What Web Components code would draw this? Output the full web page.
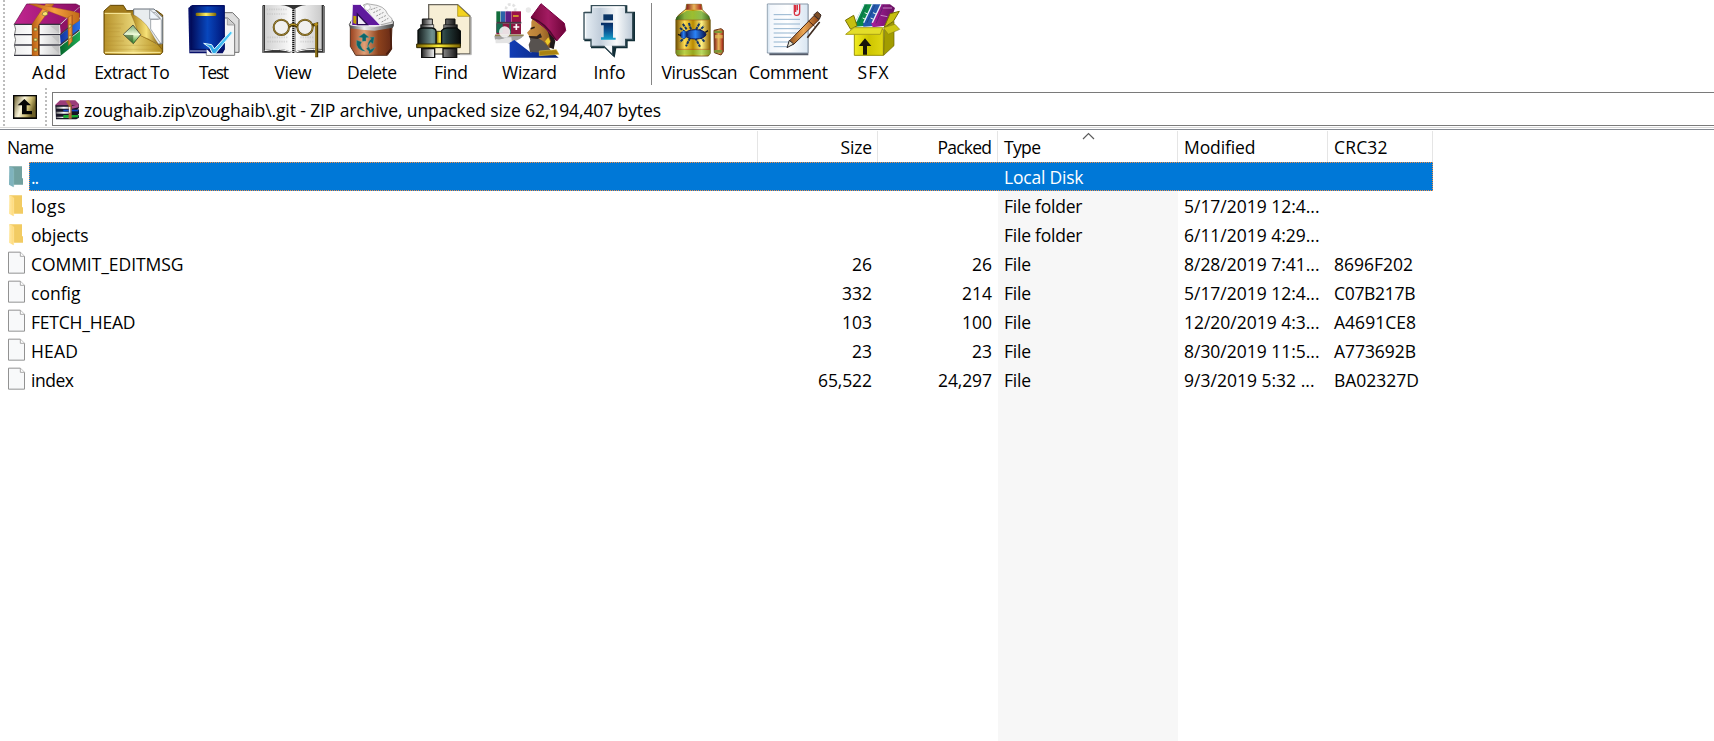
<!DOCTYPE html>
<html lang="en">
<head>
<meta charset="utf-8">
<title>zoughaib.zip</title>
<style>
html,body{margin:0;height:100%;overflow:hidden;background:#fff}
body{font:17.5px/29px "Open Sans","Noto Sans",sans-serif;color:#000}
</style>
</head>
<body>
<archive-window></archive-window>
<script>
const lin=(id,stops,v)=>`<linearGradient id="${id}" x1="0" y1="0" x2="${v?0:1}" y2="${v?1:0}">${stops.map((c,i)=>`<stop offset="${i/(stops.length-1)}" stop-color="${c}"/>`).join('')}</linearGradient>`;

/* Each entry: viewBox and artwork, drawn on a grid of three units per pixel. */
const ICONS={
add:['24 0 246 174',`<defs>${lin('p',['#efefef','#fff','#c8c8c8'])}${lin('m',['#c12690','#8a0e64'])}${lin('o',['#b65c12','#f6a040','#c06a18'])}${lin('b',['#1234a0','#2b72ea'])}${lin('g',['#05652c','#20ad54'])}</defs>
<path d="M180 140L240 93V121L182 167z" fill="url(#g)"/><path d="M180 106L240 57V88L182 134z" fill="url(#b)"/><path d="M180 75L240 20V52L182 103z" fill="#8e1265"/>
<path d="M42 74L80 12H228L240 18L178 73z" fill="url(#m)" stroke="#650746" stroke-width="2"/>
<path d="M46 74H178V101H46zM46 107H178V132H46zM46 138H178V164H46z" fill="url(#p)"/>
<path d="M42 73H182M42 104H180L238 56M42 135H180L238 90M42 166H182" stroke="#34343f" stroke-width="4" fill="none"/>
<path d="M43 73Q50 88 44 102M43 105Q50 119 44 133M43 136Q50 150 44 165" stroke="#777" stroke-width="3" fill="none"/>
<path d="M150 77l28-2v25l-8-7zM155 108l24-2v25zM155 139l24-2v26z" fill="#bbb" opacity=".7"/>
<path d="M203 52L217 41V124L205 138z" fill="url(#o)" stroke="#955013"/><path d="M96 72L137 12H162L116 74V167H96z" fill="url(#o)" stroke="#8b4a10"/><path d="M88 12H109L219 34L238 40L238 62L217 76V45L200 54z" fill="url(#o)" stroke="#955013"/>
<path d="M114 76h5v89h-5z" fill="#74390c"/><path d="M129 37l10-3 5 9-9 5-9-4zM102 84h9v8h-9zM102 115h9v8h-9zM102 145h9v8h-9zM206 76l7-4v9l-7 4zM206 109l7-4v9l-7 4z" fill="#ffe36b" stroke="#69713b" stroke-width="2"/>`],
extract:['270 0 252 174',`<defs>${lin('f',['#b8932c','#e8d476','#b58e1c'])}${lin('c',['#a67c14','#f7e278','#6c4700'])}${lin('d',['#70a06a','#effbd7','#2f981e'],1)}</defs>
<path d="M312 158V33L331 16H370L380 32H470L488 45V156L482 163H316z" fill="#a27b1b" stroke="#624500" stroke-width="3"/>
<path d="M401 27H462L488 52V130L470 134L401 60z" fill="#e9edef" stroke="#69717b" stroke-width="3"/><path d="M455 38H467L484 60V133L452 87V58H476" fill="#fff" stroke="#7b838b" stroke-width="2"/><path d="M449 28V57H480z" fill="#eef5fb" stroke="#7b838b" stroke-width="2"/>
<path d="M315 40H393L417 61L416 105L480 137L486 158L480 162H314z" fill="url(#f)"/><path d="M392 40Q405 68 417 105Q446 115 472 133L486 148Q462 115 450 91Q430 57 392 40z" fill="url(#c)" stroke="#7b5710"/>
<path d="M315 72h56M315 84h48M315 95h44M315 110h47M315 123h57M315 136h156M315 148h164" stroke="#b49034" stroke-width="2" opacity=".45"/><path d="M314 40H392M315 157H482" stroke="#fff1a4" stroke-width="3"/>
<path d="M399 75L422 104L400 131L370 103z" fill="url(#d)" stroke="#222" stroke-width="2"/><path d="M399 77V129M372 103H420" stroke="#fff" opacity=".5"/><path d="M371 104L400 130L400 105z" fill="#2b5320" opacity=".6"/>`],
test:['12 0 240 174',`<defs>${lin('b',['#020b58','#0847bd','#001679'])}${lin('c',['#2699dc','#4ccdfc'])}${lin('o',['#7d6500','#fff066','#7d6500'])}</defs>
<path d="M148 38H188L207 58V157H140z" fill="#dedede" stroke="#6e6e6e" stroke-width="3"/><path d="M109 54H173L194 73V166H109z" fill="#f4f4f4" stroke="#777" stroke-width="3"/><path d="M172 55V75H193" fill="#ccc" stroke="#888" stroke-width="2"/>
<path d="M55 24L67 15H164V149L158 160H58z" fill="#07106a"/><path d="M62 18H163V148H62z" fill="url(#b)" stroke="#00105c" stroke-width="2"/><path d="M60 153H115" stroke="#bbc0de" stroke-width="3"/><path d="M112 166V136L140 163L160 130V75L172 75H193V166z" fill="#f2f2f2" opacity="0"/><path d="M110 148L128 164H110z" fill="#fff"/>
<rect x="77" y="38" width="62" height="10" rx="4" fill="url(#o)"/><path d="M101 130L125 134L133 147L181 94L188 98L136 161H128L119 143z" fill="url(#c)" stroke="#e5faff" stroke-width="3"/>`],
view:['252 0 234 174',`<defs>${lin('p',['#d1d1d1','#fff','#cacaca'])}</defs>
<path d="M278 15H462V158H278z" fill="#333"/><path d="M276 18H282V158H276zM459 18H465V158H459z" fill="#777"/>
<path d="M285 15H330Q360 17 371 31Q382 17 410 15H455V147Q402 141 371 157Q330 141 285 150z" fill="url(#p)"/><path d="M284 152Q330 142 371 159Q402 143 456 151" stroke="#fff" stroke-width="3" fill="none"/>
<path d="M372 28V157" stroke="#929292" stroke-width="12" opacity=".7"/><path d="M370 30V159" stroke="#111" stroke-width="6" stroke-dasharray="3 3"/>
<path d="M290 28h61M291 42h58M292 112h61M292 125h61M391 112h42M391 125h42" stroke="#aaa" stroke-width="5" stroke-dasharray="4 3" opacity=".35"/>
<circle cx="334" cy="82" r="23" fill="#f0f0ef" stroke="#59460a" stroke-width="6"/><circle cx="405" cy="82" r="23" fill="#f0f0ef" stroke="#59460a" stroke-width="6"/><circle cx="334" cy="82" r="23" fill="none" stroke="#c4a550" stroke-width="2"/><circle cx="405" cy="82" r="23" fill="none" stroke="#c4a550" stroke-width="2"/>
<path d="M357 80Q369 68 382 80M427 76L440 72V172" fill="none" stroke="#4c3a04" stroke-width="9"/><path d="M357 78Q369 68 382 78M438 76V170" fill="none" stroke="#c9a52e" stroke-width="3"/><circle cx="438" cy="73" r="5" fill="#b78f1a"/>`],
delete:['-24 0 240 174',`<defs>${lin('r',['#9b421f','#e1a077','#8e431d','#672a16'])}${lin('s',['#444','#eee','#999','#444'])}</defs>
<path d="M31 139V77L156 76L153 150L142 166H47z" fill="url(#r)" stroke="#57301e" stroke-width="3"/><path d="M151 78L154 146L139 163" fill="none" stroke="#4a1d0e" stroke-width="5"/>
<path d="M28 74Q33 58 46 53H148L160 65V79Q95 92 31 80z" fill="#ddd" stroke="#444" stroke-width="3"/>
<path d="M70 15Q80 8 92 13Q135 16 143 43L156 56V66L116 76z" fill="#f3f3f3" stroke="#888" stroke-width="2"/><path d="M92 29L112 22M100 38L122 28M109 48L133 36M116 57L139 46M125 66L145 55" stroke="#999" stroke-width="3" stroke-dasharray="6 3"/>
<path d="M37 13H61L123 77H35z" fill="#5f1a9d" stroke="#fff" stroke-width="3"/><path d="M52 42V74H82z" fill="#efeaf4" stroke="#2a0c50" stroke-width="4"/><circle cx="82" cy="22" r="9" fill="#fff" stroke="#aaa" stroke-width="2"/>
<path d="M29 76Q50 81 103 82L159 71V83L104 92Q65 91 30 85z" fill="url(#s)"/><path d="M40 47l9 2v24l-9-4z" fill="#bda100"/>
<path d="M56 111L72 100L87 112L78 113V123L67 124V113zM103 111L99 132L92 126Q83 137 83 144Q82 124 94 117L90 112zM50 121L65 126L61 135Q65 148 76 154Q57 153 50 135zM79 146L86 139L91 149L106 142L97 155L87 161V154z" fill="#0d666b" stroke="#4fa8a4"/>`],
find:['216 0 234 174',`<defs>${lin('a',['#121919','#71918f','#263d3d','#090b0b'])}${lin('s',['#222','#e6e6e6','#777','#181818'])}${lin('y',['#745d00','#fff138','#776000'])}</defs>
<path d="M266 14H353L390 48V162H266z" fill="#f7eed5" stroke="#6b675e" stroke-width="4"/><path d="M394 51V164H360" stroke="#bbb" stroke-width="3" fill="none"/><path d="M353 15L389 49H353z" fill="#f3d21e" stroke="#9b8510" stroke-width="2"/>
<path d="M289 94H310V130H289z" fill="url(#y)" stroke="#453b09" stroke-width="3"/>
<path d="M247 57H277V86H247zM317 57H345V86H317z" fill="url(#s)" stroke="#111" stroke-width="3"/><path d="M242 74H281V88H242zM311 74H352V88H311z" fill="url(#s)" stroke="#111" stroke-width="2"/>
<path d="M234 91Q239 84 249 84H276Q288 86 288 94V136H234zM305 92Q311 84 321 84H349L361 93V136H305z" fill="url(#a)" stroke="#080d0d" stroke-width="4"/><path d="M230 132H361V143H230z" fill="url(#y)" stroke="#322a00" stroke-width="3"/><path d="M245 146H284V173H245zM309 146H350V173H309z" fill="url(#s)" stroke="#111" stroke-width="4"/>`],
wizard:['30 0 237 174',`<defs>${lin('r',['#77083b','#a31b62','#6c0337'])}${lin('k',['#c98f42','#b57c34','#7c4c18'])}${lin('b',['#123db5','#092273'])}</defs>
<circle cx="92" cy="27" r="14" fill="none" stroke="#e2e2e2" stroke-width="8" stroke-dasharray="8 6"/><circle cx="145" cy="30" r="8" fill="#e9e9e9"/>
<path d="M49 34H61V66H49z" fill="#126d3b"/><path d="M62 34H75V66H62z" fill="#2b63a8"/><path d="M76 34H93V66H76z" fill="#5f1d84"/><path d="M94 34H123V66H94z" fill="#9b1249"/><path d="M49 70H123V103H49z" fill="#8b1841"/><path d="M49 70H68V98H49zM88 70H93V102H88z" fill="#176c50"/><path d="M49 68H124" stroke="#473642" stroke-width="5"/><path d="M99 48h17" stroke="#dba928" stroke-width="5"/>
<path d="M43 107H130Q122 120 98 124L92 132L45 119z" fill="#a3a3a3"/><path d="M45 106H131" stroke="#8f8250" stroke-width="5"/><path d="M46 117Q65 121 80 112L94 112L96 129L47 130z" fill="#e4e4e4"/><circle cx="74" cy="96" r="17" fill="#f4f4f4" opacity=".9"/><path d="M109 72v18M100 81h18" stroke="#fff" stroke-width="5"/>
<path d="M89 173V128L103 120L151 157L210 151L236 173z" fill="url(#b)"/><path d="M158 53L222 88L214 145L160 135L150 112L141 98L154 84V66z" fill="url(#k)"/>
<path d="M148 108L174 114L190 124L205 140L214 154L186 158L150 156L146 134L151 122z" fill="#57524f"/><path d="M146 108L170 109L181 100L186 112L172 117L150 114z" fill="#2f2520"/><path d="M152 86L164 82" stroke="#2d1a0c" stroke-width="5"/><path d="M200 84L216 94L226 124L221 148L208 142L212 122z" fill="#1f1a1a"/><path d="M205 112L211 125L203 136L195 124z" fill="#ecca28"/><path d="M178 153L229 149L237 163L178 167z" fill="#aa8210" stroke="#d9bb44" stroke-width="2"/>
<path d="M153 52L183 11L253 70L257 92L230 123L195 84z" fill="url(#r)" stroke="#780044" stroke-width="3"/><path d="M154 54Q195 66 228 120" stroke="#4d092c" stroke-width="4" fill="none"/>`],
info:['267 0 243 174',`<defs>${lin('p',['#e8eff5','#c2cedb','#f8fafb','#bcc9d6'])}${lin('i',['#062a61','#0c5796','#16a4cc'],1)}</defs>
<path d="M339 16H442V35H465V124H443V145H409L404 173L375 145H333V124H313V35H339z" fill="#102d36"/><path d="M334 17H437V38H458V118H437V139H397L397 163L372 139H333V118H312V38H334z" fill="url(#p)" stroke="#374e58" stroke-width="4"/><path d="M339 21H432M317 42V112" stroke="#fff" stroke-width="3"/><path d="M370 43H399V61H370z" fill="#0b3566"/><path d="M363 68H399V113H407V119H363V112H371V76H363z" fill="url(#i)"/><path d="M374 137H396L396 160z" fill="#f5f8fa"/>`],
virus:['45 0 267 174',`<defs>${lin('g',['#735000','#ffdc52','#b98a00','#fff184','#906100'])}${lin('r',['#801515','#e8b55a','#a51d17'])}${lin('b',['#0c1858','#2b82f6','#071248'])}${lin('n',['#075a1b','#8bda49','#186e27'])}</defs>
<g transform="translate(42.4 0) scale(.797 1)"><path d="M122 13H178L181 29L204 47L211 60V160L204 168H88L82 160V58L91 46L120 27z" fill="url(#g)" stroke="#6d5915" stroke-width="3"/><path d="M124 13H176L180 29H120z" fill="url(#r)"/><path d="M91 48L122 32H177L208 49V60H83V52z" fill="url(#n)" opacity=".65"/><path d="M83 150H211V164H83z" fill="#74c43d" opacity=".5"/><path d="M90 60H204M84 148H210" stroke="#a25a1d" stroke-width="2"/></g>
<path d="M140 88L128 71M153 88L146 67M168 89L179 69M136 96L120 84M176 94L192 78M136 110L120 126M150 114L138 139M166 114L180 140M180 110L194 126" stroke="#123466" stroke-width="6" fill="none" stroke-dasharray="9 2"/><ellipse cx="166" cy="103" rx="32" ry="14" fill="url(#b)" stroke="#111c5c" stroke-width="3"/><circle cx="131" cy="104" r="11" fill="url(#b)"/><path d="M123 107L114 103M196 97L204 92" stroke="#111" stroke-width="4"/>
<path d="M222 91L243 86L250 91V155L243 165L223 158z" fill="url(#r)" stroke="#6b3a16" stroke-width="3"/><path d="M223 92H247V99H223zM223 150H247V158H223z" fill="#7c9638"/><path d="M225 105H248V115H225z" fill="#e6c35a" opacity=".7"/>`],
comment:['312 0 267 174',`<defs>${lin('p',['#f0f5fb','#fff','#d9e6f2'])}${lin('o',['#8e4e1b','#eca754','#8b4216'])}</defs>
<path d="M388 13H505V166H388z" fill="#555b68"/><path d="M382 12H504V159H382z" fill="url(#p)" stroke="#8999aa" stroke-width="3"/><path d="M386 14V156" stroke="#dce9f4" stroke-width="5"/>
<path d="M401 44H455M401 58H480M401 72H480M401 86H480M401 99H470M401 112H454M401 126H456M401 140H443" stroke="#93b4cf" stroke-width="3"/>
<path d="M463 14V38Q463 47 470 46Q479 46 479 35V13M472 14V31M467 15V36" fill="none" stroke="#d73140" stroke-width="4"/><path d="M449 122L522 47L537 59L461 133L445 137z" fill="url(#o)" stroke="#482713" stroke-width="3"/><path d="M521 45L532 35L543 45L538 58z" fill="#7d4d25" stroke="#3b2a24" stroke-width="3"/><path d="M539 66L502 113" stroke="#3d2a1f" stroke-width="5"/><path d="M448 121L441 143L461 132z" fill="#e7e3d0" stroke="#26252b" stroke-width="3"/><path d="M506 63L524 79" stroke="#4f2710" stroke-width="3"/>`],
sfx:['579 0 240 174',`<defs>${lin('y',['#f1ec20','#cec500','#e0d813'])}${lin('p',['#a91f9c','#671060'])}</defs>
<path d="M644 68L672 13H697L674 78L646 80z" fill="#0a8a49"/><path d="M670 70L696 13H723L702 78L670 80z" fill="#2458ac"/><path d="M694 70L723 13H750L765 24L747 76L698 82z" fill="url(#p)"/><path d="M672 13L648 65M697 13L671 68M723 13L697 68" stroke="#e9f5ff" stroke-width="4"/><path d="M680 14L657 66M705 14L681 68M732 14L708 70" stroke="#0a2a50" stroke-width="2" opacity=".5"/><path d="M668 54l9 4M692 54l9 4M674 38l9 4M699 38l9 4" stroke="#e8f4e8" stroke-width="3"/><path d="M728 24H756M722 46L742 50" stroke="#e6bbe9" stroke-width="2"/>
<path d="M616 61L641 46L651 77L632 88zM732 83L750 41L778 34L760 64z" fill="#c6bf10" stroke="#756f00" stroke-width="3"/><path d="M643 88H730V166H643z" fill="url(#y)" stroke="#99920a" stroke-width="3"/><path d="M733 84L762 64L762 137L731 166z" fill="#a29c00" stroke="#696300" stroke-width="2"/><path d="M642 83H728L721 103H617z" fill="#e3dd29" stroke="#aaa217" stroke-width="3"/><path d="M730 83L765 73L779 88L745 103z" fill="#cdc714" stroke="#8b8417" stroke-width="2"/>
<path d="M675 115L694 138H681V164H669V138H656z" fill="#17140a"/>`],
up:['39 30 72 72',`<defs><linearGradient id="g" x1="0" y1="0" x2="1" y2=".35"><stop offset="0" stop-color="#6b5f30"/><stop offset=".45" stop-color="#fbf6dc"/><stop offset=".75" stop-color="#c9b96f"/><stop offset="1" stop-color="#6c5f28"/></linearGradient></defs><path d="M39 30H111V102H39z" fill="#050505"/><path d="M43 34H107V97H43z" fill="url(#g)"/><path d="M73 42L93 61H80V78H96V88H66V61H53z" fill="#050505"/>`],
books:['165 45 72 60',`<defs>${lin('p',['#777','#fff','#aaa'])}</defs><path d="M166 59L180 46H226L237 57L223 66H168z" fill="#9b3d79"/><path d="M166 61H230L237 57V68L229 79L237 72V86L229 94L237 90V98L229 103H168z" fill="#171526"/><path d="M169 65H213V71H169zM169 80H213V86H169zM169 95H212V99H169z" fill="url(#p)"/><path d="M216 63L236 58V67L216 71z" fill="#a8478a"/><path d="M190 74H235V79H190z" fill="#1448c6"/><path d="M190 90H235V97L190 99z" fill="#17a830"/><path d="M197 48L207 46L215 60V101H206V62z" fill="#b06c3c"/><path d="M209 66V83" stroke="#eee" stroke-width="4"/>`],
folder:['27 14 48 66',`<defs>${lin('f',['#ffe9a6','#ffd977'])}</defs><path d="M28 15H66V51H69V70H40z" fill="#f2cb62"/><path d="M28 15L41 20V78L27 70z" fill="url(#f)"/><path d="M41 23V75" stroke="#ffe8a2" stroke-width="2"/>`],
folderup:['27 14 48 66',`<path d="M28 15H66V51H69V70H40z" fill="#72a19f"/><path d="M28 15L41 20V78L27 70z" fill="#7fb3bd"/><path d="M41 23V75" stroke="#8dbcc2" stroke-width="2"/>`],
file:['24 184 54 69',`<path d="M25.5 187.5H61L73.500 200V250.500H25.500z" fill="#f8f9fa" stroke="#929292" stroke-width="3"/><path d="M61 188V200H73" fill="#fff" stroke="#999" stroke-width="2.500"/>`]
};

class ArchiveIcon extends HTMLElement{
  connectedCallback(){
    const [box,art]=ICONS[this.getAttribute('name')];
    this.attachShadow({mode:'open'}).innerHTML=`<style>:host{display:block;flex:none}svg{display:block;width:100%;height:100%}</style><svg viewBox="${box}" aria-hidden="true">${art}</svg>`;
  }
}
customElements.define('archive-icon',ArchiveIcon);

/* A one-line label tracked to a given width. */
class FitText extends HTMLElement{
  connectedCallback(){
    this.attachShadow({mode:'open'}).innerHTML='<style>:host{display:inline-block;white-space:pre;flex:none}</style><slot></slot>';
    const w=+this.getAttribute('w'),n=this.textContent.length;
    if(w&&n>1){
      const s=(w-this.getBoundingClientRect().width)/(n-1);
      this.style.letterSpacing=s+'px';
      this.style.marginRight=-s+'px';
    }
  }
}
customElements.define('fit-text',FitText);

class ToolButton extends HTMLElement{
  connectedCallback(){
    const a=k=>this.getAttribute(k);
    this.attachShadow({mode:'open'}).innerHTML=`<style>:host{display:flex;flex-direction:column;align-items:center;flex:none;width:${a('width')}px}archive-icon{width:100%;height:58px}fit-text{display:block}</style><archive-icon name="${a('icon')}"></archive-icon><fit-text w="${a('w')}">${a('label')}</fit-text>`;
  }
}
customElements.define('tool-button',ToolButton);

class GripBar extends HTMLElement{
  connectedCallback(){
    this.attachShadow({mode:'open'}).innerHTML='<style>:host{display:block;width:2px;flex:none;background:repeating-linear-gradient(#bdbdbd 0 2px,#fff 2px 4px)}</style>';
  }
}
customElements.define('grip-bar',GripBar);

class ArchiveToolbar extends HTMLElement{
  connectedCallback(){
    const b=(l,i,width,w)=>`<tool-button label="${l}" icon="${i}" width="${width}" w="${w}"></tool-button>`;
    this.attachShadow({mode:'open'}).innerHTML=`<style>:host{display:flex;height:88px;padding-left:3px}grip-bar{margin-right:3px}i{width:1px;height:82px;margin:3px 3px 0 1px;background:#858585;flex:none}</style><grip-bar></grip-bar>`
    +b('Add','add',82,34)+b('Extract To','extract',84,75.5)+b('Test','test',80,30)+b('View','view',78,37)+b('Delete','delete',80,50)+b('Find','find',78,34)+b('Wizard','wizard',79,55)+b('Info','info',81,32)+'<i></i>'+b('VirusScan','virus',89,76)+b('Comment','comment',89,79)+b('SFX','sfx',80,31);
  }
}
customElements.define('archive-toolbar',ArchiveToolbar);

class AddressBar extends HTMLElement{
  connectedCallback(){
    this.attachShadow({mode:'open'}).innerHTML=`<style>:host{display:flex;height:39px;padding-left:3px;border-bottom:1px solid #d8d8d8;box-sizing:content-box}
    .up{width:24px;height:24px;margin:7px 8px 0 8px}.box{flex:1;display:flex;height:32px;margin:4px 0 0 5px;border:1px solid #7a7a7a;border-right:0;padding-left:2px}
    .books{width:24px;height:20px;margin:7px 5px 0 0}fit-text{line-height:35px}</style>
    <grip-bar></grip-bar><archive-icon class="up" name="up"></archive-icon><grip-bar></grip-bar><div class="box"><archive-icon class="books" name="books"></archive-icon><fit-text w="577">zoughaib.zip\\zoughaib\\.git - ZIP archive, unpacked size 62,194,407 bytes</fit-text></div>`;
  }
}
customElements.define('address-bar',AddressBar);

const GRID='display:grid;grid-template-columns:758px 120px 120px 180px 150px 105px;width:1433px;';

class ListHeader extends HTMLElement{
  connectedCallback(){
    this.attachShadow({mode:'open'}).innerHTML=`<style>:host{${GRID}height:31px;padding-top:1px;position:relative}
    div{box-sizing:border-box;border-right:1px solid #e5e5e5;padding:2px 5px 0 6px;height:31px;line-height:28px;overflow:hidden}.first{padding-left:7px}.r{text-align:right}
    svg{position:absolute;left:1082px;top:2px}</style>
    <div class="first"><fit-text w="47">Name</fit-text></div><div class="r"><fit-text w="31.500">Size</fit-text></div><div class="r"><fit-text w="54.500">Packed</fit-text></div><div><fit-text w="37">Type</fit-text></div><div><fit-text w="71.500">Modified</fit-text></div><div><fit-text w="53.500">CRC32</fit-text></div>
    <svg width="13" height="8" viewBox="0 0 13 8"><path d="M1 7L6.500 1.500L12 7" fill="none" stroke="#5c5c5c" stroke-width="1.200"/></svg>`;
  }
}
customElements.define('list-header',ListHeader);

class FileRow extends HTMLElement{
  set data([icon,name,nw,size,sw,packed,pw,type,tw,date,dw,crc,cw]){
    const t=(s,w)=>s?`<fit-text w="${w}">${s}</fit-text>`:'';
    this.attachShadow({mode:'open'}).innerHTML=`<style>:host{${GRID}height:29px;position:relative}
    :host([selected]){color:#fff;background:linear-gradient(90deg,#fff 29px,#0078d7 29px)}
    :host([selected])::after{content:"";position:absolute;inset:0 0 0 29px;border:1px dotted #f09048}
    div{box-sizing:border-box;padding:1px 6px 0 6px;height:29px;line-height:28px;overflow:hidden;white-space:nowrap}.r{text-align:right}
    .n{display:flex;padding-left:8px}.n archive-icon{width:18px;height:23px;margin:1px 5px 0 0}.n archive-icon[name^=folder]{width:16px;height:22px;margin:3px 6px 0 1px}</style>
    <div class="n"><archive-icon name="${icon}"></archive-icon>${t(name,nw)}</div><div class="r">${t(size,sw)}</div><div class="r">${t(packed,pw)}</div><div>${t(type,tw)}</div><div>${t(date,dw)}</div><div>${t(crc,cw)}</div>`;
  }
}
customElements.define('file-row',FileRow);

class FileList extends HTMLElement{
  connectedCallback(){
    this.attachShadow({mode:'open'}).innerHTML=`<style>:host{display:block;flex:1;border-top:1px solid #828790}.body{height:580px;background:linear-gradient(90deg,transparent 998px,#f7f7f7 998px 1178px,transparent 1178px)}</style><list-header></list-header><div class="body"></div>`;
    const body=this.shadowRoot.querySelector('.body');
    [['folderup','..',8,'',0,'',0,'Local Disk',79.5,'',0,'',0],
     ['folder','logs',34.5,'',0,'',0,'File folder',78.5,'5/17/2019 12:4...',135.5,'',0],
     ['folder','objects',57.5,'',0,'',0,'File folder',78.5,'6/11/2019 4:29...',135.5,'',0],
     ['file','COMMIT_EDITMSG',152.5,'26',20,'26',20,'File',27,'8/28/2019 7:41...',135.5,'8696F202',79],
     ['file','config',49.5,'332',30,'214',30,'File',27,'5/17/2019 12:4...',135.5,'C07B217B',81.5],
     ['file','FETCH_HEAD',104.5,'103',30,'100',30,'File',27,'12/20/2019 4:3...',135.5,'A4691CE8',82],
     ['file','HEAD',47,'23',20,'23',20,'File',27,'8/30/2019 11:5...',135.5,'A773692B',82],
     ['file','index',43,'65,522',54,'24,297',54,'File',27,'9/3/2019 5:32 ...',130.5,'BA02327D',85]
    ].forEach((d,i)=>{
      const r=document.createElement('file-row');
      body.append(r);
      if(!i)r.toggleAttribute('selected',true);
      r.data=d;
    });
  }
}
customElements.define('file-list',FileList);

class ArchiveWindow extends HTMLElement{
  connectedCallback(){
    this.attachShadow({mode:'open'}).innerHTML='<style>:host{display:flex;flex-direction:column;height:100vh;overflow:hidden;background:#fff}archive-toolbar,address-bar{flex:none}file-list{margin-top:1px}</style><archive-toolbar></archive-toolbar><address-bar></address-bar><file-list></file-list>';
  }
}
customElements.define('archive-window',ArchiveWindow);
</script>
</body>
</html>
